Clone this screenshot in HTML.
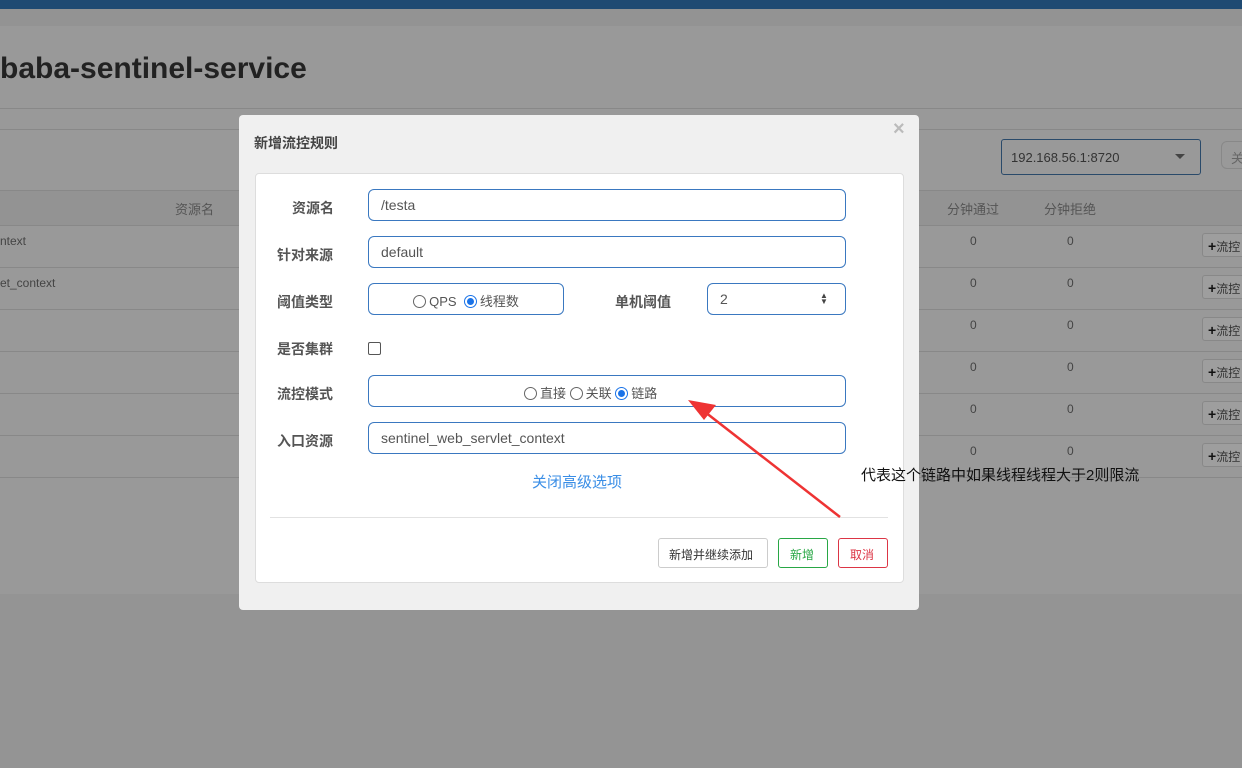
<!DOCTYPE html>
<html><head><meta charset="utf-8"><style>
*{box-sizing:border-box;margin:0;padding:0}
body{width:1242px;height:768px;overflow:hidden;background:#949494;font-family:"Liberation Sans","Noto Sans CJK SC",sans-serif;position:relative;font-size:13px;color:#333}
.abs{position:absolute}
.page{left:0;top:0;width:1242px;height:594px;background:#999}
.hl{height:1px;background:#888;left:0;width:1242px}
.row0{color:#444;font-size:12px}
.btn{background:#9e9e9e;border:1px solid #888;border-radius:3px;font-size:12px;color:#333;height:24px;width:50px;padding:4px 5px}
.modal{left:239px;top:115px;width:680px;height:495px;background:#f0f0f0;border-radius:4px}
.inner{left:255px;top:173px;width:649px;height:410px;background:#fff;border:1px solid #ddd;border-radius:4px}
.lbl{font-size:14px;font-weight:bold;color:#555}
.inp{border:1px solid #3a78c0;border-radius:6px;height:32px;background:#fff;font-size:14px;color:#555;padding:7px 12px}
.radio{display:inline-block;width:13px;height:13px;border:1px solid #666;border-radius:50%;vertical-align:-2px;margin-right:3px;background:#fff;position:relative}
.radio.on{border-color:#1a73e8}
.radio.on:after{content:"";position:absolute;left:2px;top:2px;width:7px;height:7px;border-radius:50%;background:#1a73e8}
</style></head><body>
<div class="abs page"></div>
<div class="abs" style="left:0;top:0;width:1242px;height:9px;background:#1f4a72"></div>
<div class="abs" style="left:0;top:9px;width:1242px;height:17px;background:#939393"></div>
<div class="abs" style="left:0;top:52px;font-size:30px;font-weight:bold;color:#222">baba-sentinel-service</div>
<div class="abs hl" style="top:108px"></div>
<div class="abs hl" style="top:129px"></div>
<div class="abs" style="left:0;top:190px;width:1242px;height:36px;background:#939393;border-top:1px solid #888;border-bottom:1px solid #888"></div>
<div class="abs row0" style="left:175px;top:199px;font-size:13px;color:#555">资源名</div>
<div class="abs row0" style="left:947px;top:199px;font-size:13px;color:#555">分钟通过</div>
<div class="abs row0" style="left:1044px;top:199px;font-size:13px;color:#555">分钟拒绝</div>
<div class="abs row0" style="left:0;top:234px">ntext</div>
<div class="abs row0" style="left:0;top:276px">et_context</div>
<div class="abs" style="left:1001px;top:139px;width:200px;height:36px;border:1px solid #2a4a6a;border-radius:3px;padding:10px 9px;font-size:13px;color:#333">192.168.56.1:8720</div>
<div class="abs" style="left:1175px;top:154px;border:5px solid transparent;border-top:5px solid #444"></div>
<div class="abs" style="left:1221px;top:141px;width:30px;height:28px;border:1px solid #888;border-radius:6px;padding:6px 9px;color:#666">关</div>
<div id="rows"></div>
<script>
var h='';for(var i=0;i<6;i++){var y=234+i*42;
h+='<div class="abs row0" style="left:970px;top:'+y+'px">0</div><div class="abs row0" style="left:1067px;top:'+y+'px">0</div>';
h+='<div class="abs btn" style="left:1202px;top:'+(y-1)+'px"><b style="font-size:14px;color:#111">+</b>流控</div>';
h+='<div class="abs hl" style="top:'+(y+33)+'px"></div>';}
document.getElementById('rows').innerHTML=h;
</script>
<div class="abs modal"></div>
<div class="abs" style="left:254px;top:133px;font-size:14px;font-weight:bold;color:#444">新增流控规则</div>
<div class="abs" style="left:893px;top:118px;font-size:20px;color:#bbb;font-weight:bold">×</div>
<div class="abs inner"></div>
<div class="abs lbl" style="left:292px;top:198px">资源名</div>
<div class="abs inp" style="left:368px;top:189px;width:478px">/testa</div>
<div class="abs lbl" style="left:277px;top:245px">针对来源</div>
<div class="abs inp" style="left:368px;top:236px;width:478px">default</div>
<div class="abs lbl" style="left:277px;top:292px">阈值类型</div>
<div class="abs inp" style="left:368px;top:283px;width:196px;text-align:center;padding-left:0;padding-right:0;font-size:13px"><span class="radio"></span>QPS &nbsp;<span class="radio on"></span>线程数</div>
<div class="abs lbl" style="left:615px;top:292px">单机阈值</div>
<div class="abs inp" style="left:707px;top:283px;width:139px">2</div>
<div class="abs" style="left:820px;top:293px;font-size:8px;color:#444;line-height:6px">▲<br>▼</div>
<div class="abs lbl" style="left:277px;top:339px">是否集群</div>
<div class="abs" style="left:368px;top:342px;width:13px;height:13px;border:1px solid #555;border-radius:2px"></div>
<div class="abs lbl" style="left:277px;top:384px">流控模式</div>
<div class="abs inp" style="left:368px;top:375px;width:478px;font-size:13px;padding-left:155px"><span class="radio"></span>直接 <span class="radio"></span>关联 <span class="radio on"></span>链路</div>
<div class="abs lbl" style="left:277px;top:431px">入口资源</div>
<div class="abs inp" style="left:368px;top:422px;width:478px">sentinel_web_servlet_context</div>
<div class="abs" style="left:532px;top:471px;font-size:15px;color:#3a8ee6">关闭高级选项</div>
<div class="abs" style="left:270px;top:517px;width:618px;height:1px;background:#e2e2e2"></div>
<div class="abs" style="left:658px;top:538px;width:110px;height:30px;border:1px solid #ccc;border-radius:3px;font-size:12px;padding:7px 10px;color:#333">新增并继续添加</div>
<div class="abs" style="left:778px;top:538px;width:50px;height:30px;border:1px solid #28a745;border-radius:3px;font-size:12px;padding:7px 11px;color:#28a745">新增</div>
<div class="abs" style="left:838px;top:538px;width:50px;height:30px;border:1px solid #dc3545;border-radius:3px;font-size:12px;padding:7px 11px;color:#dc3545">取消</div>
<svg class="abs" style="left:0;top:0" width="1242" height="768"><line x1="840" y1="517" x2="705" y2="412" stroke="#ee3333" stroke-width="2.5"/><polygon points="688,400 716,405 704,420" fill="#ee3333"/></svg>
<div class="abs" style="left:861px;top:464px;font-size:15px;color:#111">代表这个链路中如果线程线程大于2则限流</div>
</body></html>
